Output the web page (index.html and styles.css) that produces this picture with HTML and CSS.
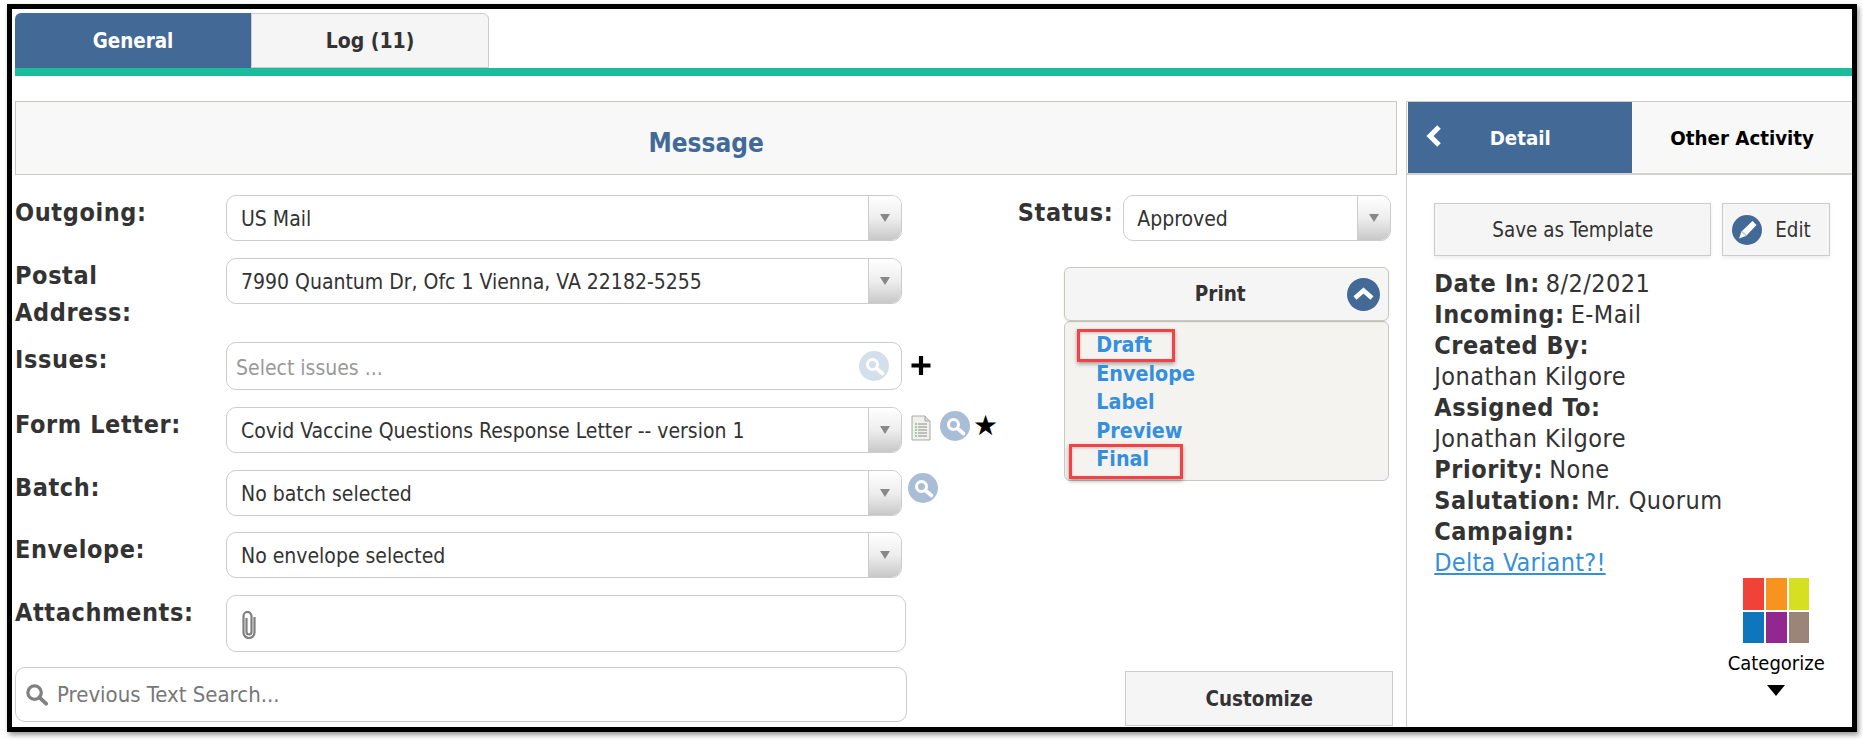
FILE: index.html
```html
<!DOCTYPE html>
<html lang="en">
<head>
<meta charset="utf-8">
<title>Message</title>
<link rel="stylesheet" href="styles.css">
</head>
<body>
<svg class="defs" width="0" height="0" aria-hidden="true">
  <symbol id="lens" viewBox="0 0 30 30">
    <circle cx="15" cy="15" r="15"/>
    <circle cx="13.5" cy="13.5" r="5" fill="none" stroke="#fff" stroke-width="3"/>
    <path d="M17.5 17.5l6 5" stroke="#fff" stroke-width="3.6" stroke-linecap="round"/>
  </symbol>
</svg>
<div class="frame">
  <nav class="tabs">
    <div class="tab tab-active">General</div>
    <div class="tab">Log (11)</div>
  </nav>
  <div class="teal"></div>
  <main class="main">
    <section class="left">
      <header class="msg-head">Message</header>
      <div class="form-area">
        <div class="form">
          <div class="row">
            <label class="lbl">Outgoing:</label>
            <div class="select grow"><span class="val">US Mail</span><span class="arrow"><i></i></span></div>
          </div>
          <div class="row row-tall">
            <label class="lbl">Postal<br>Address:</label>
            <div class="select grow"><span class="val">7990 Quantum Dr, Ofc 1 Vienna, VA 22182-5255</span><span class="arrow"><i></i></span></div>
          </div>
          <div class="row row-48">
            <label class="lbl">Issues:</label>
            <div class="select grow issues"><span class="ph">Select issues ...</span><svg class="lens lens-light"><use href="#lens"/></svg></div>
            <svg class="plus" viewBox="0 0 20 20"><path d="M10 0v20M0 10h20" stroke="#000" stroke-width="4.4"/></svg>
          </div>
          <div class="row">
            <label class="lbl">Form Letter:</label>
            <div class="select grow"><span class="val">Covid Vaccine Questions Response Letter -- version 1</span><span class="arrow"><i></i></span></div>
            <svg class="doc" viewBox="0 0 20 26">
              <path d="M1 1h13l5 5v19H1z" fill="#f0f0ec" stroke="#a9a9a2"/>
              <path d="M14 1v5h5" fill="#d8d8d8" stroke="#a9a9a2"/>
              <path d="M7 9h9M7 12h9M7 15h9M7 18h9M7 21h9" stroke="#8c8c8c"/>
              <path d="M4 9h2M4 12h2M4 15h2M4 18h2M4 21h2" stroke="#4cae4c"/>
            </svg>
            <svg class="lens lens-form"><use href="#lens"/></svg>
            <span class="star">★</span>
          </div>
          <div class="row row-45">
            <label class="lbl">Batch:</label>
            <div class="select grow"><span class="val">No batch selected</span><span class="arrow"><i></i></span></div>
            <svg class="lens lens-batch"><use href="#lens"/></svg>
          </div>
          <div class="row">
            <label class="lbl">Envelope:</label>
            <div class="select grow"><span class="val">No envelope selected</span><span class="arrow"><i></i></span></div>
          </div>
          <div class="row row-attach">
            <label class="lbl">Attachments:</label>
            <div class="select attach">
              <svg class="clip" viewBox="0 0 14 28"><path d="M4.500 7v14a2.500 2.500 0 0 0 5 0V5a4 4 0 0 0-8 0v16.500a5.500 5.500 0 0 0 11 0V6" fill="none" stroke="#7f7f7f" stroke-width="2.200"/></svg>
            </div>
          </div>
          <div class="search">
            <svg class="search-ico" viewBox="0 0 24 24"><circle cx="10" cy="10" r="7" fill="none" stroke="#808080" stroke-width="3.4"/><path d="M15 15l7 6.500" stroke="#808080" stroke-width="4" stroke-linecap="round"/></svg>
            <span class="search-ph">Previous Text Search...</span>
          </div>
        </div>
        <aside class="side">
          <div class="status">
            <label class="lbl">Status:</label>
            <div class="select status-sel"><span class="val">Approved</span><span class="arrow"><i></i></span></div>
          </div>
          <div class="print">
            <div class="print-head">Print
              <svg class="chev" viewBox="0 0 33 33"><circle cx="16.500" cy="16.500" r="16.500" fill="#436a97"/><path d="M8 20l8.500-7.500L25 20" fill="none" stroke="#fff" stroke-width="4.600"/></svg>
            </div>
            <div class="print-body">
              <a class="plink">Draft<span class="mark mark-draft"></span></a>
              <a class="plink">Envelope</a>
              <a class="plink">Label</a>
              <a class="plink">Preview</a>
              <a class="plink">Final<span class="mark mark-final"></span></a>
            </div>
          </div>
          <button class="customize">Customize</button>
        </aside>
      </div>
    </section>
    <section class="right">
      <div class="rtabs">
        <div class="rtab rtab-active">
          <svg class="back" viewBox="0 0 16 24"><path d="M13 3L4 12l9 9" fill="none" stroke="#fff" stroke-width="5"/></svg>
          Detail
        </div>
        <div class="rtab">Other Activity</div>
      </div>
      <div class="rbody">
        <div class="btns">
          <button class="btn btn-save">Save as Template</button>
          <button class="btn btn-edit">
            <svg class="pencil" viewBox="0 0 30 30"><circle cx="15" cy="15" r="15" fill="#436a97"/><path d="M7 23.500l2.500-7L20.500 6l4 4L14 21z" fill="#fff"/><path d="M10 16.500l4 4" stroke="#b9c7d8" stroke-width="1.500"/></svg>
            Edit
          </button>
        </div>
        <dl class="info">
          <div class="ln"><b>Date In:</b><span>8/2/2021</span></div>
          <div class="ln"><b>Incoming:</b><span>E-Mail</span></div>
          <div class="ln"><b>Created By:</b></div>
          <div class="ln">Jonathan Kilgore</div>
          <div class="ln"><b>Assigned To:</b></div>
          <div class="ln">Jonathan Kilgore</div>
          <div class="ln"><b>Priority:</b><span>None</span></div>
          <div class="ln"><b>Salutation:</b><span>Mr. Quorum</span></div>
          <div class="ln"><b>Campaign:</b></div>
          <div class="ln"><a class="delta">Delta Variant?!</a></div>
        </dl>
        <div class="cat">
          <div class="swatches">
            <i class="s1"></i><i class="s2"></i><i class="s3"></i><i class="s4"></i><i class="s5"></i><i class="s6"></i>
          </div>
          <div class="cat-text">Categorize</div>
          <div class="cat-arrow"></div>
        </div>
      </div>
    </section>
  </main>
</div>
</body>
</html>
```
FILE: styles.css
```css
* { box-sizing: border-box; }
html, body { margin: 0; height: 740px; background: #fff; overflow: hidden; }
body {
  padding: 4px 0 0 7px;
  font-family: "DejaVu Sans", Verdana, sans-serif;
  font-stretch: condensed;
  font-size: 21px;
  color: #333;
}
.defs { position: absolute; }
.frame {
  width: 1850px;
  height: 728px;
  border: 5px solid #000;
  box-shadow: 2px 3px 5px rgba(0,0,0,.4);
  background: #fff;
}
.tabs { display: flex; margin: 4px 0 0 3px; height: 55px; }
.tab {
  width: 238px;
  display: flex; align-items: center; justify-content: center;
  font-weight: bold;
  background: #f5f5f5;
  border: 1px solid #ccc;
  border-radius: 0 6px 0 0;
}
.tab-active {
  width: 236px;
  background: #436a97;
  border: 0;
  color: #fff;
  font-size: 20.4px;
  border-radius: 6px 0 0 0;
}
.teal { height: 8px; margin-left: 3px; background: #1abc9c; }
.main { display: flex; margin: 25px 0 0 2px; height: 626px; }
.left { width: 1383px; margin-left: 1px; display: flex; flex-direction: column; }
.msg-head {
  height: 74px;
  padding-top: 9px;
  display: flex; align-items: center; justify-content: center;
  background: #f8f8f8;
  border: 1px solid #c9c9c0;
  color: #436a97;
  font-size: 26px;
  font-weight: bold;
}
.form-area { display: flex; flex: 1; padding-top: 20px; }
.form { width: 892px; display: flex; flex-direction: column; gap: 17px; }
.row { display: flex; height: 46px; align-items: flex-start; position: relative; }
.row-tall { height: 67px; }
.row-48 { height: 48px; }
.row-45 { height: 45px; }
.row-attach { height: 57px; margin-bottom: -2px; }
.lbl {
  width: 211px;
  flex: none;
  font-size: 25px;
  letter-spacing: .6px;
  font-weight: bold;
  line-height: 37px;
  margin-top: -1px;
  color: #333;
}
.select {
  height: 46px;
  border: 1px solid #ccc;
  border-radius: 10px;
  background: #fff;
  display: flex;
  align-items: center;
  overflow: hidden;
  flex: none;
}
.grow { width: 676px; }
.val { flex: 1; padding: 1px 0 0 14px; white-space: nowrap; }
.arrow {
  width: 33px;
  height: 100%;
  border-left: 1px solid #ccc;
  background: linear-gradient(#fff, #eee 50%, #c8c8c8);
  display: flex; align-items: center; justify-content: center;
}
.arrow i {
  width: 0; height: 0;
  border-left: 5px solid transparent;
  border-right: 5px solid transparent;
  border-top: 8px solid #888;
}
.issues { height: 48px; justify-content: space-between; padding: 0 12px 0 9px; }
.ph { color: #999; padding-top: 3px; }
.lens { display: block; width: 30px; height: 30px; fill: #a9bed6; flex: none; }
.lens-light { fill: #d3dfeb; }
.plus { width: 20px; height: 19px; margin: 14px 0 0 9px; flex: none; }
.doc { width: 20px; height: 26px; margin: 8px 0 0 9px; flex: none; }
.lens-form { margin: 4px 0 0 9px; }
.lens-batch { margin: 3px 0 0 6px; }
.star { font-size: 28px; color: #000; margin: 3px 0 0 3px; line-height: 32px; font-stretch: normal; flex: none; }
.attach { width: 680px; height: 57px; padding-left: 15px; }
.clip { width: 14px; height: 28px; margin-top: 2px; }
.search {
  width: 892px;
  height: 55px;
  border: 1px solid #ccc;
  border-radius: 10px;
  display: flex; align-items: center;
  padding-left: 9px;
  flex: none;
}
.search-ico { width: 23px; height: 23px; }
.search-ph { color: #777; margin-left: 9px; font-size: 22px; }
.side { flex: 1; display: flex; flex-direction: column; align-items: flex-end; padding-right: 6px; }
.status { display: flex; align-items: flex-start; }
.status .lbl { width: auto; padding-right: 10px; }
.status-sel { width: 268px; }
.status-sel .val { padding-left: 13px; }
.print { width: 325px; margin: 26px 2px 0 0; }
.print-head {
  height: 54px;
  position: relative;
  display: flex; align-items: center; justify-content: center;
  background: #f5f5f5;
  border: 1px solid #c9c9c0;
  border-radius: 6px;
  font-weight: bold;
  font-size: 20.5px;
  padding-right: 13px;
  box-shadow: 0 1px 3px rgba(0,0,0,.08);
}
.chev { position: absolute; right: 8px; top: 10px; width: 33px; height: 33px; }
.print-body {
  height: 160px;
  background: #f5f3ef;
  border: 1px solid #c9c9c0;
  border-radius: 6px;
  padding: 9px 0 0 31px;
}
.plink {
  display: block;
  position: relative;
  height: 28.5px;
  line-height: 28.5px;
  font-size: 21.3px;
  font-weight: bold;
  color: #3490dc;
}
.mark {
  position: absolute;
  border: 3px solid #f44146;
  box-shadow: 0 2px 4px rgba(0,0,0,.35), inset 0 1px 3px rgba(0,0,0,.2);
}
.mark-draft { left: -19px; top: -2px; width: 98px; height: 33px; }
.mark-final { left: -27px; top: -1px; width: 114px; height: 35px; }
.customize {
  margin-top: auto;
  margin-bottom: 1px;
  margin-right: -2px;
  width: 268px;
  height: 55px;
  background: #f5f5f5;
  border: 1px solid #ccc;
  font: bold 20.4px "DejaVu Sans", sans-serif;
  font-stretch: condensed;
  color: #333;
}
.right { width: 446px; margin-left: 9px; border-left: 1px solid #ccc; border-top: 1px solid #ccc; }
.rtabs { display: flex; height: 73px; border-bottom: 2px solid #d4d2cc; background: #f8f8f8; }
.rtab {
  flex: 1;
  display: flex; align-items: center; justify-content: center;
  padding-top: 1px;
  font-weight: bold;
  font-size: 20.3px;
  color: #000;
  position: relative;
}
.rtab-active {
  flex: none;
  width: 224px;
  margin-left: 1px;
  background: #436a97;
  color: #fff;
}
.back { position: absolute; left: 18px; top: 22px; width: 16px; height: 24px; }
.rbody { position: relative; height: 552px; padding: 28px 0 0 27px; }
.btns { display: flex; gap: 11px; }
.btn {
  height: 53px;
  padding-top: 2px;
  background: #f5f5f5;
  border: 1px solid #ccc;
  font: 20.4px "DejaVu Sans", sans-serif;
  font-stretch: condensed;
  color: #333;
  box-shadow: 0 2px 4px rgba(0,0,0,.08);
}
.btn-save { width: 277px; }
.btn-edit { width: 108px; display: flex; align-items: center; gap: 13px; padding: 0 0 0 9px; }
.pencil { width: 30px; height: 30px; }
.info { margin: 12px 0 0; }
.ln { height: 31px; line-height: 31px; font-size: 25px; letter-spacing: .45px; display: flex; gap: 6px; white-space: nowrap; }
.ln b { color: #333; letter-spacing: .55px; }
.delta { color: #3490dc; text-decoration: underline; letter-spacing: .25px; }
.cat {
  position: absolute;
  left: 314px;
  top: 403px;
  width: 110px;
  display: flex; flex-direction: column; align-items: center;
}
.swatches { display: grid; grid-template-columns: 21px 21px 20px; grid-template-rows: 32px 31px; gap: 2px; }
.s1 { background: #f04236; }
.s2 { background: #f8931f; }
.s3 { background: #d7df21; }
.s4 { background: #0f75bc; }
.s5 { background: #92278f; }
.s6 { background: #9b8579; }
.cat-text { font-size: 20px; line-height: 26px; color: #000; margin-top: 7px; }
.cat-arrow {
  margin-top: 9px;
  width: 0; height: 0;
  border-left: 9px solid transparent;
  border-right: 9px solid transparent;
  border-top: 11px solid #000;
}
```
